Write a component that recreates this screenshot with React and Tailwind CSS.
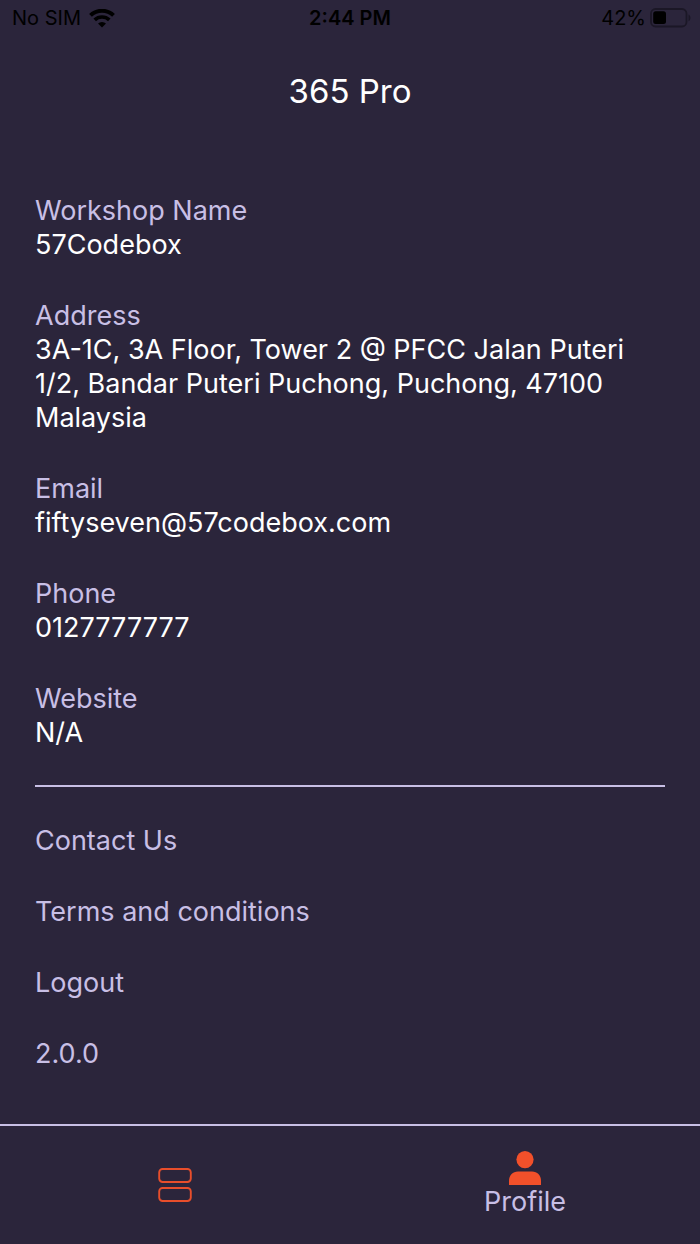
const details = [
  { label: 'Workshop Name', value: '57Codebox' },
  {
    label: 'Address',
    value: '3A-1C, 3A Floor, Tower 2 @ PFCC Jalan Puteri 1/2, Bandar Puteri Puchong, Puchong, 47100 Malaysia',
  },
  { label: 'Email', value: 'fiftyseven@57codebox.com' },
  { label: 'Phone', value: '0127777777' },
  { label: 'Website', value: 'N/A' },
];

function WifiIcon() {
  return (
    <svg viewBox="0 0 26 19" className="h-[19px] w-[26px]" fill="none" stroke="currentColor" aria-hidden="true">
      <path d="M1.500 6.400a16.600 16.600 0 0 1 23 0" strokeWidth="4" />
      <path d="M5.700 10.900a10.600 10.600 0 0 1 14.600 0" strokeWidth="3.700" />
      <path d="M13 18.600 9 14.600a5.700 5.700 0 0 1 8 0z" fill="currentColor" stroke="none" />
    </svg>
  );
}

function BatteryIcon() {
  return (
    <svg viewBox="0 0 42 20" className="h-5 w-[42px]" fill="none" aria-hidden="true">
      <rect x="1" y="1" width="35.5" height="17.5" rx="4.5" stroke="#1b1726" strokeWidth="1.8" />
      <rect x="3.2" y="3.2" width="12.8" height="12.8" rx="2.5" fill="#000" />
      <path d="M38.5 6.5c2.6 1.2 2.6 5.6 0 6.8z" fill="#1b1726" />
    </svg>
  );
}

function ListIcon() {
  return (
    <svg viewBox="0 0 34 34" className="h-[34px] w-[34px]" fill="none" stroke="#e84e2b" strokeWidth="1.9" aria-hidden="true">
      <rect x="1.2" y="1" width="31.600" height="13" rx="3.4" />
      <rect x="1.2" y="20" width="31.600" height="13" rx="3.4" />
    </svg>
  );
}

function PersonIcon() {
  return (
    <svg viewBox="0 0 34 34" className="h-[34px] w-[34px]" fill="#f2502a" aria-hidden="true">
      <circle cx="17" cy="8.6" r="8.6" />
      <path d="M1 34v-4.5C1 24.200 4.800 20.400 10 20.400h14c5.200 0 9 3.800 9 9.100V34z" />
    </svg>
  );
}

export default function App() {
  return (
    <div className="flex min-h-screen flex-col bg-[#2b253b] font-['Inter',sans-serif] text-[27px] leading-[34px] text-[#c8bfe5]">
      <div className="grid h-9 grid-cols-3 items-center px-2 text-[20px] leading-6 text-black">
        <div className="flex items-center gap-2 pl-1">
          <span>No SIM</span>
          <WifiIcon />
        </div>
        <span className="text-center font-semibold">2:44 PM</span>
        <div className="flex items-center justify-end gap-1">
          <span>42%</span>
          <BatteryIcon />
        </div>
      </div>

      <header className="py-8">
        <h1 className="text-center text-[33px] leading-[46px] text-white">365 Pro</h1>
      </header>

      <main className="flex flex-1 flex-col px-[35px] pt-12 pb-9">
        <dl className="flex flex-col gap-[37px]">
          {details.map((d) => (
            <div key={d.label}>
              <dt>{d.label}</dt>
              <dd className="text-white">{d.value}</dd>
            </div>
          ))}
        </dl>
        <hr className="mt-[35px] mb-[37px] border-t-2 border-[#c8bfe5]" />
        <div className="flex flex-col items-start gap-[37px]">
          <a href="#contact">Contact Us</a>
          <a href="#terms">Terms and conditions</a>
          <button type="button">Logout</button>
          <p>2.0.0</p>
        </div>
      </main>

      <nav className="grid h-[120px] grid-cols-2 border-t-2 border-[#c8bfe5]">
        <a href="#jobs" aria-label="Jobs" className="flex items-center justify-center">
          <ListIcon />
        </a>
        <a href="#profile" aria-current="page" className="flex flex-col items-center justify-center">
          <PersonIcon />
          <span>Profile</span>
        </a>
      </nav>
    </div>
  );
}
